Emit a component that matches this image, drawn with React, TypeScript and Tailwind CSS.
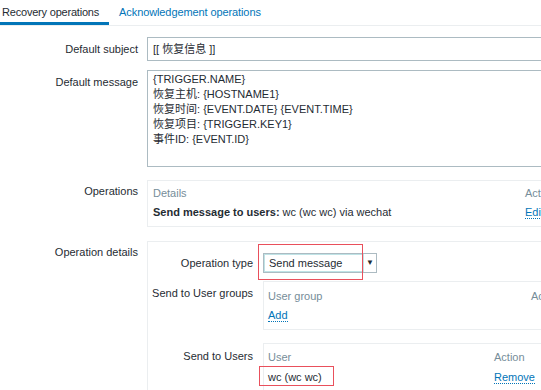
import React from 'react';

const font = "font-['Liberation_Sans','Noto_Sans_CJK_SC',sans-serif]";

const Link = ({ children }: { children: React.ReactNode }) => (
  <span className="text-[#0275b8] border-b border-dotted border-[#0275b8] leading-[13px]">{children}</span>
);

const Label = ({ children, className = '' }: { children: React.ReactNode; className?: string }) => (
  <div className={`w-[147px] shrink-0 pr-[9px] text-right ${className}`}>{children}</div>
);

const App = () => {
  return (
    <div className={`w-[541px] h-[390px] overflow-hidden bg-white text-[11px] text-[#1f2c33] ${font}`}>
      {/* Tabs */}
      <div className="flex h-[26px] border-b border-[#ebeef0]">
        <div className="pl-[2px] pr-[10px] pt-[4px] border-b-[3px] border-[#0275b8] tracking-[-0.2px]">Recovery operations</div>
        <div className="pl-[10px] pt-[4px] text-[#0275b8] tracking-[-0.1px]">Acknowledgement operations</div>
      </div>

      <div className="pt-[11px]">
        {/* Default subject */}
        <div className="flex items-center">
          <Label>Default subject</Label>
          <div className="w-[420px] h-[24px] shrink-0 border border-[#acbbc2] px-[5px] flex items-center">[[ 恢复信息 ]]</div>
        </div>

        {/* Default message */}
        <div className="flex mt-[9px]">
          <Label className="pt-[4px]">Default message</Label>
          <div className="w-[420px] h-[97px] shrink-0 border border-[#acbbc2] px-[5px] pt-[1px] leading-[15px]">
            <div>{'{TRIGGER.NAME}'}</div>
            <div>恢复主机: {'{HOSTNAME1}'}</div>
            <div>恢复时间: {'{EVENT.DATE}'} {'{EVENT.TIME}'}</div>
            <div>恢复项目: {'{TRIGGER.KEY1}'}</div>
            <div>事件ID: {'{EVENT.ID}'}</div>
          </div>
        </div>

        {/* Operations */}
        <div className="flex mt-[13px]">
          <Label className="pt-[3px]">Operations</Label>
          <div className="w-[420px] h-[47px] shrink-0 border border-[#ebeef0] pl-[5px] pt-[3px] leading-[19px]">
            <div className="flex text-[#768d99]">
              <div className="w-[372px]">Details</div>
              <div>Actions</div>
            </div>
            <div className="flex">
              <div className="w-[372px]">
                <span className="font-bold">Send message to users:</span> wc (wc wc) via wechat
              </div>
              <div><Link>Edit</Link></div>
            </div>
          </div>
        </div>

        {/* Operation details */}
        <div className="flex mt-[14px]">
          <Label className="pt-[3px]">Operation details</Label>
          <div className="w-[420px] h-[160px] shrink-0 border border-[#ebeef0] pt-[11px]">
            {/* Operation type */}
            <div className="flex items-center">
              <div className="w-[115px] shrink-0 pr-[10px] text-right">Operation type</div>
              <div className="relative flex h-[20px] w-[114px] border border-[#acbbc2]">
                <div className="flex-1 flex items-center pl-[4px] border border-[#bfe3e6]">Send message</div>
                <div className="w-[12px] flex items-center justify-center text-[8px]">▼</div>
                <div className="absolute left-[-6px] top-[-10px] w-[105px] h-[36px] border-[1.5px] border-[#e9505c]" />
              </div>
            </div>

            {/* Send to User groups */}
            <div className="flex mt-[8px]">
              <div className="w-[115px] shrink-0 pr-[10px] text-right pt-[4px]">Send to User groups</div>
              <div className="w-[400px] h-[49px] border border-[#ebeef0] pl-[4px] pt-[5px] leading-[19px]">
                <div className="flex text-[#768d99]">
                  <div className="w-[263px]">User group</div>
                  <div>Action</div>
                </div>
                <div><Link>Add</Link></div>
              </div>
            </div>

            {/* Send to Users */}
            <div className="flex mt-[13px]">
              <div className="w-[115px] shrink-0 pr-[10px] text-right pt-[5px]">Send to Users</div>
              <div className="w-[400px] h-[60px] border border-[#ebeef0] pl-[4px] pt-[3px] leading-[20px]">
                <div className="flex text-[#768d99]">
                  <div className="w-[226px]">User</div>
                  <div>Action</div>
                </div>
                <div className="flex">
                  <div className="w-[226px]">
                    <span className="relative">
                      wc (wc wc)
                      <span className="absolute left-[-9px] top-[-5px] w-[75px] h-[20px] border-[1.5px] border-[#e9505c]" />
                    </span>
                  </div>
                  <div><Link>Remove</Link></div>
                </div>
              </div>
            </div>
          </div>
        </div>
      </div>
    </div>
  );
};

export default App;
